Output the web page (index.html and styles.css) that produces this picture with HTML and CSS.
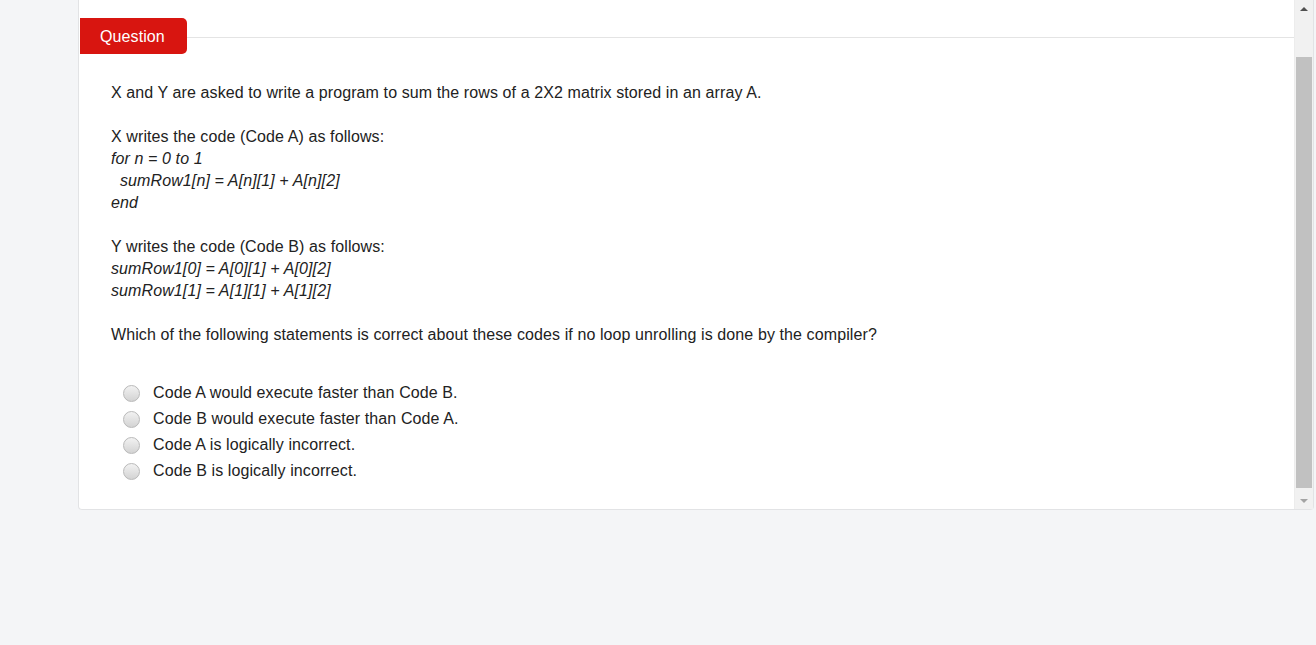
FILE: index.html
```html
<!DOCTYPE html>
<html>
<head>
<meta charset="utf-8">
<link rel="stylesheet" href="styles.css">
</head>
<body>
<div class="panel">
  <div class="content">
    <div class="header">
      <div class="tab">Question</div>
      <div class="rule"></div>
    </div>
    <div class="body">
      <p>X and Y are asked to write a program to sum the rows of a 2X2 matrix stored in an array A.</p>
      <p>X writes the code (Code A) as follows:<br>
        <em>for n = 0 to 1</em><br>
        <em class="indent">sumRow1[n] = A[n][1] + A[n][2]</em><br>
        <em>end</em></p>
      <p>Y writes the code (Code B) as follows:<br>
        <em>sumRow1[0] = A[0][1] + A[0][2]</em><br>
        <em>sumRow1[1] = A[1][1] + A[1][2]</em></p>
      <p>Which of the following statements is correct about these codes if no loop unrolling is done by the compiler?</p>
      <ul class="options">
        <li><span class="radio"></span><span>Code A would execute faster than Code B.</span></li>
        <li><span class="radio"></span><span>Code B would execute faster than Code A.</span></li>
        <li><span class="radio"></span><span>Code A is logically incorrect.</span></li>
        <li><span class="radio"></span><span>Code B is logically incorrect.</span></li>
      </ul>
    </div>
  </div>
  <div class="scrollbar">
    <div class="arrow up"></div>
    <div class="track"><div class="thumb"></div></div>
    <div class="arrow down"></div>
  </div>
</div>
</body>
</html>
```
FILE: styles.css
```css
html, body {
  margin: 0;
  padding: 0;
  background: #f4f5f7;
  font-family: "Liberation Sans", Arial, sans-serif;
  color: #222;
}
.panel {
  margin-left: 78px;
  margin-right: 2px;
  height: 509px;
  background: #fff;
  border: 1px solid #e2e3e5;
  border-top: none;
  border-radius: 0 0 4px 4px;
  display: flex;
}
.content {
  flex: 1;
  min-width: 0;
}
.header {
  display: flex;
  align-items: center;
  padding-top: 18px;
  padding-left: 1px;
}
.tab {
  background: #d81510;
  color: #fff;
  font-size: 16px;
  height: 36px;
  line-height: 37px;
  padding: 0 22px 0 20px;
  letter-spacing: 0.1px;
  border-radius: 0 5px 5px 0;
}
.rule {
  flex: 1;
  height: 1px;
  background: #e4e4e4;
  margin-top: 2px;
}
.body {
  padding: 28px 32px 0 32px;
  font-size: 16px;
  line-height: 22px;
  letter-spacing: 0.1px;
}
.body p {
  margin: 0 0 22px 0;
}
.indent {
  padding-left: 9px;
}
.options {
  list-style: none;
  margin: 34px 0 0 0;
  padding: 0;
}
.options li {
  display: flex;
  align-items: center;
  height: 26px;
}
.radio {
  width: 15px;
  height: 15px;
  border-radius: 50%;
  border: 1px solid #b9b9b9;
  background: linear-gradient(#f2f2f2, #d3d3d3);
  margin-left: 12px;
  margin-right: 13px;
  flex: none;
}
.scrollbar {
  width: 18px;
  background: #f1f1f1;
  display: flex;
  flex-direction: column;
  border-left: 1px solid #ececec;
}
.arrow {
  height: 17px;
  display: flex;
  align-items: center;
  justify-content: center;
}
.arrow::before {
  content: "";
  width: 0;
  height: 0;
  border-left: 4px solid transparent;
  border-right: 4px solid transparent;
}
.arrow.up::before {
  border-bottom: 4px solid #505050;
}
.arrow.down::before {
  border-top: 4px solid #a3a3a3;
}
.track {
  flex: 1;
  padding: 40px 1px 4px 1px;
  display: flex;
}
.thumb {
  flex: 1;
  background: #c1c1c1;
}
```
